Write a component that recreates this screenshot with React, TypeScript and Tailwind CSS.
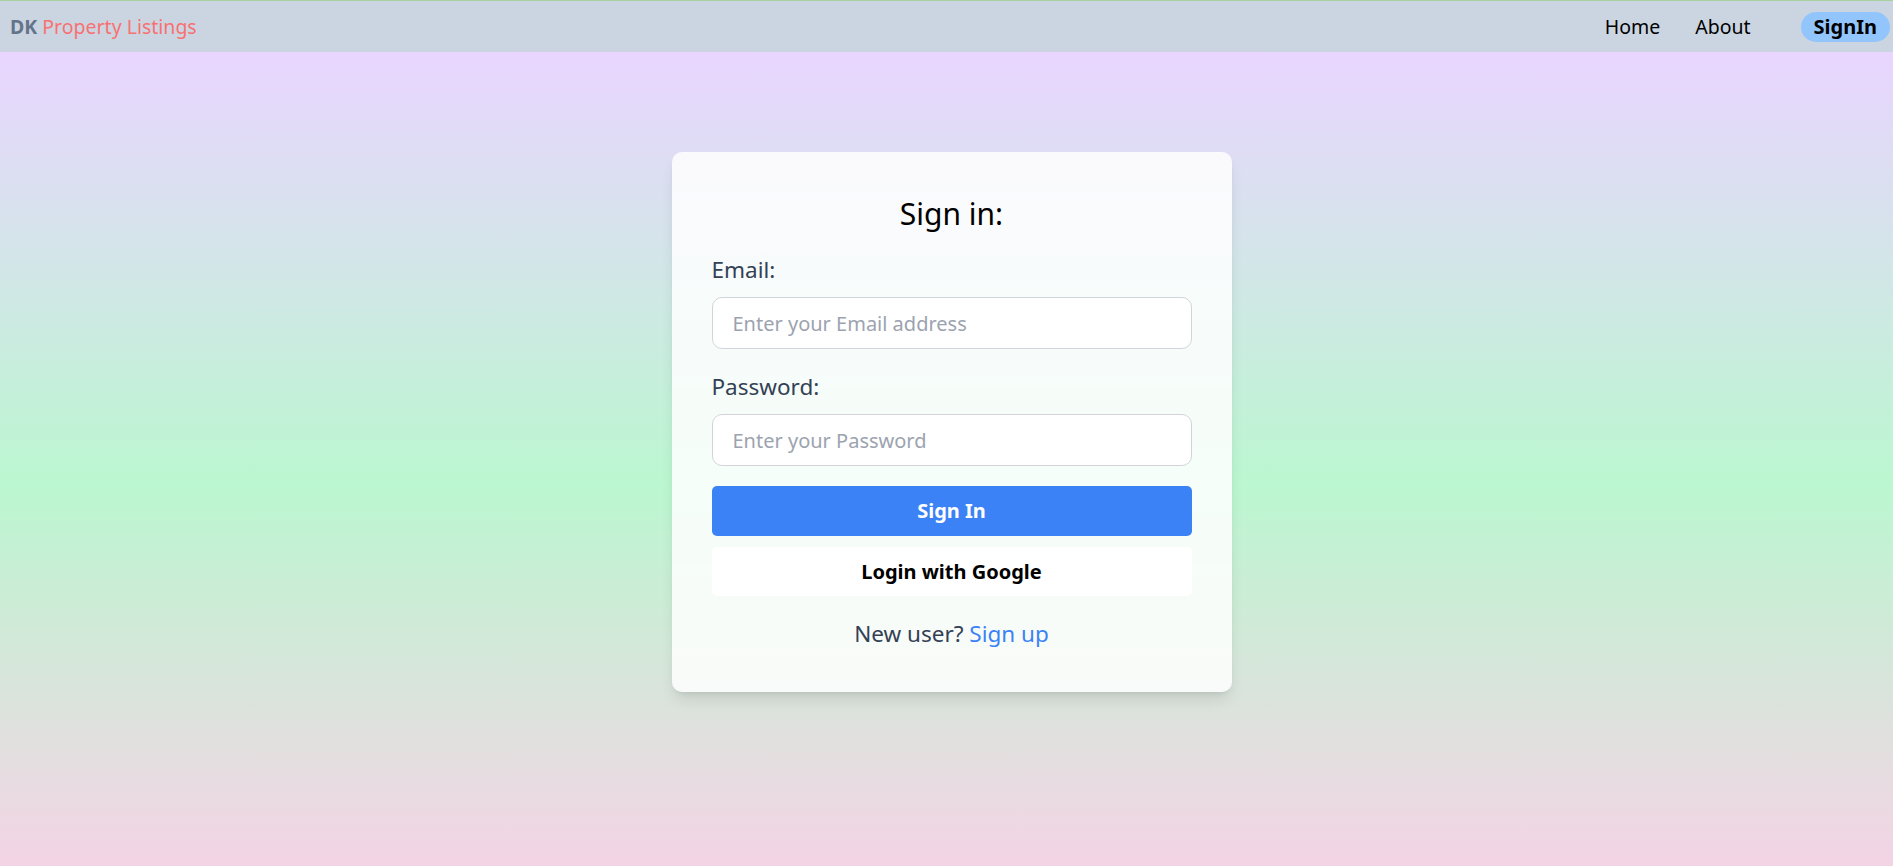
import React, { useState } from "react";

const font = { fontFamily: '"Noto Sans", "Open Sans", sans-serif' };

function Header() {
  return (
    <header className="h-[52px] border-t border-[#a6d2a0] bg-[#cbd5e1] flex items-center justify-between pl-[10px] pr-[3px]">
      <a href="#" className="text-[19.5px] font-bold">
        <span className="text-[#64748b]">DK</span>{" "}
        <span className="text-[#f87171] font-normal">Property Listings</span>
      </a>
      <nav className="flex items-center">
        <a href="#" className="text-[19.5px] text-black">
          Home
        </a>
        <a href="#" className="ml-[35px] text-[19.5px] text-black">
          About
        </a>
        <a
          href="#"
          className="ml-[50px] h-[30px] flex items-center rounded-full bg-[#93c5fd] px-[13px] text-[20px] font-bold text-black"
        >
          SignIn
        </a>
      </nav>
    </header>
  );
}

export default function App() {
  const [email, setEmail] = useState("");
  const [password, setPassword] = useState("");

  return (
    <div style={font} className="h-screen overflow-hidden flex flex-col">
      <Header />
      <main className="flex-1 bg-[linear-gradient(to_bottom,#e9d5ff,#bbf7d0,#fbcfe8)] bg-[length:100%_866px] pt-[100px] pl-[10px] flex justify-center items-start">
        <div className="w-[560px] rounded-[10px] bg-white/85 shadow-lg px-[40px] pt-[39px] pb-[43px]">
          <h1 className="text-center text-[30px] leading-[45px] text-black mb-[16px]">
            Sign in:
          </h1>

          {/* Email */}
          <label className="block text-[22.5px] leading-[35px] text-[#334155] mb-[10px]">
            Email:
          </label>
          <input
            type="email"
            value={email}
            onChange={(e) => setEmail(e.target.value)}
            placeholder="Enter your Email address"
            className="block w-full h-[52px] rounded-[10px] border border-[#d1d5db] bg-white px-[20px] text-[20px] text-[#334155] placeholder:text-[#9ca3af] outline-none mb-[20px]"
          />

          {/* Password */}
          <label className="block text-[22.5px] leading-[35px] text-[#334155] mb-[10px]">
            Password:
          </label>
          <input
            type="password"
            value={password}
            onChange={(e) => setPassword(e.target.value)}
            placeholder="Enter your Password"
            className="block w-full h-[52px] rounded-[10px] border border-[#d1d5db] bg-white px-[20px] text-[20px] text-[#334155] placeholder:text-[#9ca3af] outline-none"
          />

          <button className="mt-[20px] block w-full h-[50px] rounded-[5px] bg-[#3b82f6] text-[20px] font-bold text-white">
            Sign In
          </button>
          <button className="mt-[11px] block w-full h-[49px] rounded-[5px] bg-white text-[20px] font-bold text-black">
            Login with Google
          </button>

          <p className="mt-[23px] text-center text-[22.5px] leading-[30px] text-[#334155]">
            New user?{" "}
            <a href="#" className="text-[#3b82f6]">
              Sign up
            </a>
          </p>
        </div>
      </main>
    </div>
  );
}
